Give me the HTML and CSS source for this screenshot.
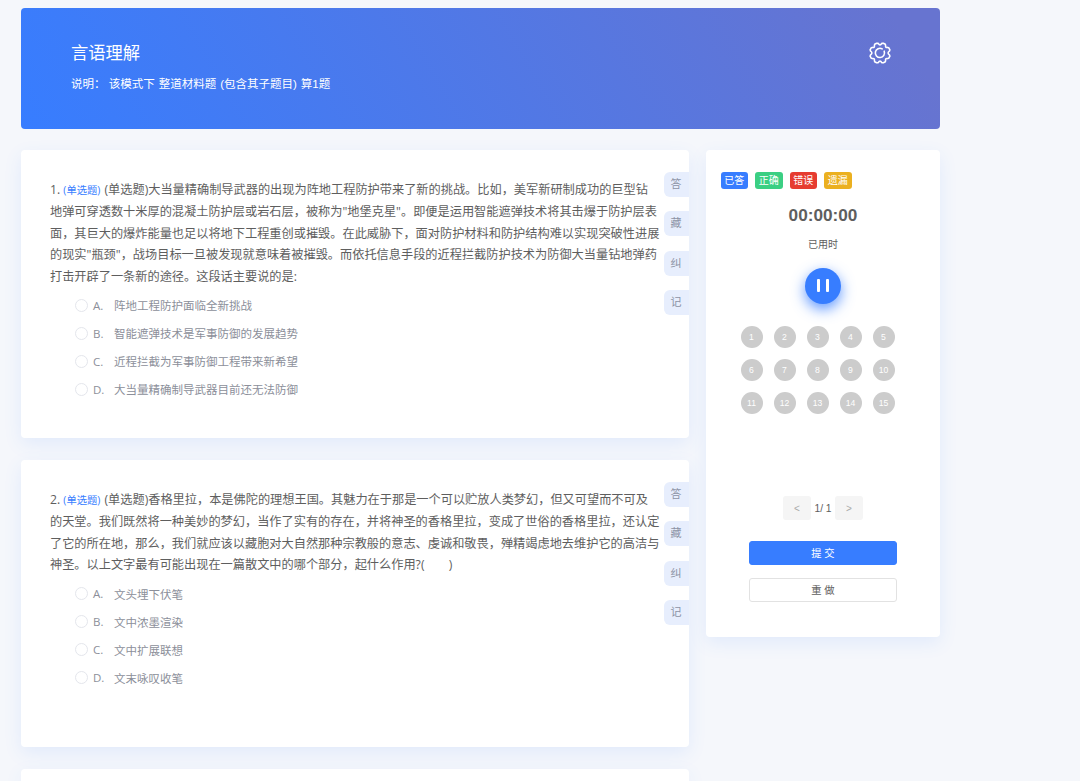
FILE: index.html
```
<!DOCTYPE html>
<html lang="zh-CN">
<head>
    <meta charset="UTF-8">
    <meta name="viewport" content="width=device-width, initial-scale=1.0">
    <title>言语理解</title>
    <link rel="stylesheet" href="styles.css">
</head>
<body>
<div class="container">
    <header class="banner">
        <div>
            <h1>言语理解</h1>
            <p>说明： <span class="mode">该模式下 整道材料题 (包含其子题目) 算1题</span></p>
        </div>
        <svg class="setting" viewBox="0 0 22 22" fill="none" stroke="#fff" stroke-width="1.6" stroke-linejoin="round" stroke-linecap="round">
            <path d="M7.6 1.2 L9.2 1.4 Q11 4.4 12.8 1.4 L14.4 1.2 L16.3 2.2 L16.6 3.6 Q16.2 5.8 18.4 5.4 L19.8 5.8 L20.9 7.8 L20.4 9.2 Q17.8 11 20.4 12.8 L20.9 14.2 L19.8 16.2 L18.4 16.6 Q16.2 16.2 16.6 18.4 L16.3 19.8 L14.4 20.8 L12.8 20.6 Q11 17.6 9.2 20.6 L7.6 20.8 L5.7 19.8 L5.4 18.4 Q5.8 16.2 3.6 16.6 L2.2 16.2 L1.1 14.2 L1.6 12.8 Q4.2 11 1.6 9.2 L1.1 7.8 L2.2 5.8 L3.6 5.4 Q5.8 5.8 5.4 3.6 L5.7 2.2 Z"/>
            <path d="M13.2 6.9 A4.6 4.6 0 1 0 15.2 9.2"/>
        </svg>
    </header>

    <div class="main">
        <div class="questions">
            <section class="card card-first">
                <div class="title">1. <span class="type">(单选题)</span> (单选题)大当量精确制导武器的出现为阵地工程防护带来了新的挑战。比如，美军新研制成功的巨型钻<br>地弹可穿透数十米厚的混凝土防护层或岩石层，被称为"地堡克星"。即便是运用智能遮弹技术将其击爆于防护层表<br>面，其巨大的爆炸能量也足以将地下工程重创或摧毁。在此威胁下，面对防护材料和防护结构难以实现突破性进展<br>的现实"瓶颈"，战场目标一旦被发现就意味着被摧毁。而依托信息手段的近程拦截防护技术为防御大当量钻地弹药<br>打击开辟了一条新的途径。这段话主要说的是:</div>
                <ul class="options">
                    <li><i class="radio"></i><b>A.</b>阵地工程防护面临全新挑战</li>
                    <li><i class="radio"></i><b>B.</b>智能遮弹技术是军事防御的发展趋势</li>
                    <li><i class="radio"></i><b>C.</b>近程拦截为军事防御工程带来新希望</li>
                    <li><i class="radio"></i><b>D.</b>大当量精确制导武器目前还无法防御</li>
                </ul>
                <div class="tools">
                    <span>答</span>
                    <span>藏</span>
                    <span>纠</span>
                    <span>记</span>
                </div>
            </section>

            <section class="card card-second">
                <div class="title">2. <span class="type">(单选题)</span> (单选题)香格里拉，本是佛陀的理想王国。其魅力在于那是一个可以贮放人类梦幻，但又可望而不可及<br>的天堂。我们既然将一种美妙的梦幻，当作了实有的存在，并将神圣的香格里拉，变成了世俗的香格里拉，还认定<br>了它的所在地，那么，我们就应该以藏胞对大自然那种宗教般的意志、虔诚和敬畏，殚精竭虑地去维护它的高洁与<br>神圣。以上文字最有可能出现在一篇散文中的哪个部分，起什么作用?(　　)</div>
                <ul class="options">
                    <li><i class="radio"></i><b>A.</b>文头埋下伏笔</li>
                    <li><i class="radio"></i><b>B.</b>文中浓墨渲染</li>
                    <li><i class="radio"></i><b>C.</b>文中扩展联想</li>
                    <li><i class="radio"></i><b>D.</b>文末咏叹收笔</li>
                </ul>
                <div class="tools">
                    <span>答</span>
                    <span>藏</span>
                    <span>纠</span>
                    <span>记</span>
                </div>
            </section>

            <section class="card card-next"></section>
        </div>

        <aside class="sheet">
            <div class="tags">
                <span class="done">已答</span>
                <span class="right">正确</span>
                <span class="wrong">错误</span>
                <span class="miss">遗漏</span>
            </div>
            <div class="timer">00:00:00</div>
            <div class="used">已用时</div>
            <div class="pause"><i></i><i></i></div>
            <div class="numbers">
                <span>1</span><span>2</span><span>3</span><span>4</span><span>5</span>
                <span>6</span><span>7</span><span>8</span><span>9</span><span>10</span>
                <span>11</span><span>12</span><span>13</span><span>14</span><span>15</span>
            </div>
            <div class="pager">
                <button>&lt;</button>
                <span>1/ 1</span>
                <button>&gt;</button>
            </div>
            <button class="btn submit">提 交</button>
            <button class="btn redo">重 做</button>
        </aside>
    </div>
</div>
</body>
</html>
```
FILE: styles.css
```
* {
    box-sizing: border-box;
}

body {
    margin: 0;
    background-color: #f5f7fb;
    font-family: "Open Sans", "Noto Sans CJK SC", sans-serif;
    color: #5e5e5e;
}

.container {
    width: 919px;
    margin-left: 21px;
    padding-top: 8px;
}

.banner {
    display: flex;
    justify-content: space-between;
    height: 120.5px;
    padding: 32px 49px 0 50px;
    border-radius: 4px;
    background: linear-gradient(60deg, #377dff, #6774d0 95%);
    color: #fff;
}

.banner h1 {
    margin: 0;
    font-size: 17.3px;
    font-weight: normal;
    line-height: 25px;
}

.banner p {
    margin: 10px 0 0;
    font-family: "Liberation Sans", "Noto Sans CJK SC", sans-serif;
    font-size: 11.5px;
    line-height: 18px;
    white-space: nowrap;
}

.mode {
    word-spacing: 0.8px;
}

.setting {
    width: 22px;
    height: 22px;
    margin-top: 2px;
}

.main {
    display: flex;
    justify-content: space-between;
    align-items: flex-start;
    height: 630.5px;
    margin-top: 21.5px;
}

.questions {
    display: flex;
    flex-direction: column;
    gap: 22px;
    width: 667.5px;
}

.card {
    position: relative;
    padding: 28.5px 29px 0;
    border-radius: 4px;
    background-color: #fff;
    box-shadow: 0 6px 18px rgba(55, 125, 255, 0.1);
}

.card-first {
    height: 288px;
}

.card-second {
    height: 286.5px;
}

/* 下一题只露出顶部 */
.card-next {
    height: 12px;
    padding: 0;
    border-radius: 4px 4px 0 0;
}

.title {
    font-size: 12.2px;
    line-height: 21.6px;
    white-space: nowrap;
}

.type {
    margin-right: 1px;
    font-size: 10.3px;
    color: #377dff;
}

.options {
    margin: 4px 0 0;
    padding: 0 0 0 24.5px;
    list-style: none;
    font-size: 11.5px;
    color: #8c8f9a;
}

.options li {
    display: flex;
    align-items: center;
    height: 28px;
}

.options b {
    width: 21px;
    font-weight: normal;
}

.radio {
    width: 13px;
    height: 13px;
    margin-right: 5.5px;
    border: 1px solid #e4e6ec;
    border-radius: 50%;
}

/* 右侧悬浮工具 */
.tools {
    position: absolute;
    top: 21.5px;
    right: 0;
    display: flex;
    flex-direction: column;
    gap: 14.5px;
}

.tools span {
    width: 25px;
    height: 25px;
    border-radius: 6px 0 0 6px;
    background-color: #e7eefd;
    font-size: 11px;
    line-height: 24px;
    text-align: center;
    color: #8c93a5;
}

.sheet {
    display: flex;
    flex-direction: column;
    align-items: center;
    width: 234px;
    height: 487px;
    padding-top: 21.5px;
    border-radius: 4px;
    background-color: #fff;
    box-shadow: 0 6px 18px rgba(55, 125, 255, 0.1);
}

.tags {
    display: flex;
    align-self: flex-start;
    gap: 7px;
    margin-left: 14.5px;
}

.tags span {
    width: 27.5px;
    height: 17.5px;
    border-radius: 3px;
    font-size: 10px;
    line-height: 17px;
    text-align: center;
    color: #fff;
}

.done {
    background-color: #377dff;
}

.right {
    background-color: #3bcf83;
}

.wrong {
    background-color: #e63c30;
}

.miss {
    background-color: #ebb020;
}

.timer {
    margin-top: 16px;
    font-family: "Liberation Sans", sans-serif;
    font-size: 17.2px;
    font-weight: bold;
    line-height: 20px;
}

.used {
    margin-top: 10.5px;
    font-size: 10px;
    line-height: 16px;
}

.pause {
    display: flex;
    justify-content: center;
    align-items: center;
    gap: 6px;
    width: 36px;
    height: 36px;
    margin-top: 16px;
    border-radius: 50%;
    background-color: #377dff;
    box-shadow: 0 5px 14px rgba(55, 125, 255, 0.8);
}

.pause i {
    width: 3px;
    height: 13px;
    border-radius: 1px;
    background-color: #fff;
}

.numbers {
    display: grid;
    grid-template-columns: repeat(5, 22px);
    gap: 11px;
    margin: 22.5px 11px 0 0;
}

.numbers span {
    height: 22px;
    border-radius: 50%;
    background-color: #ccc;
    font-family: "Liberation Sans", sans-serif;
    font-size: 8.6px;
    line-height: 22px;
    text-align: center;
    color: #fff;
}

.pager {
    display: flex;
    align-items: center;
    margin-top: 82px;
    font-family: "Liberation Sans", sans-serif;
    font-size: 10.3px;
}

.pager span {
    width: 24px;
    text-align: center;
    white-space: nowrap;
}

.pager button {
    width: 28px;
    height: 24px;
    padding: 0;
    border: none;
    border-radius: 3px;
    background-color: #f5f5f5;
    font-family: inherit;
    font-size: 10px;
    color: #aaa;
}

.btn {
    width: 148px;
    height: 24px;
    padding: 0;
    border-radius: 3px;
    font-family: inherit;
    font-size: 10.3px;
    line-height: 20px;
}

.submit {
    margin-top: 20.5px;
    border: 1px solid #377dff;
    background-color: #377dff;
    color: #fff;
}

.redo {
    margin-top: 13px;
    border: 1px solid #e2e2e2;
    background-color: #fff;
    color: #5e5e5e;
}
```
